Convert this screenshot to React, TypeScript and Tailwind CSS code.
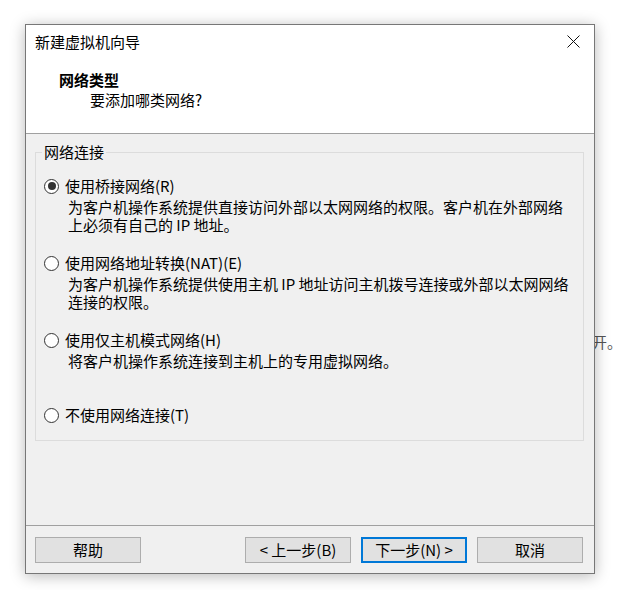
import React from 'react';

type NetOption = {
  label: string;
  lines: string[];
  checked?: boolean;
};

const options: NetOption[] = [
  {
    label: '使用桥接网络(R)',
    lines: ['为客户机操作系统提供直接访问外部以太网网络的权限。客户机在外部网络', '上必须有自己的 IP 地址。'],
    checked: true,
  },
  {
    label: '使用网络地址转换(NAT)(E)',
    lines: ['为客户机操作系统提供使用主机 IP 地址访问主机拨号连接或外部以太网网络', '连接的权限。'],
  },
  {
    label: '使用仅主机模式网络(H)',
    lines: ['将客户机操作系统连接到主机上的专用虚拟网络。'],
  },
];

const Radio = ({ checked }: { checked?: boolean }) => (
  <span className="flex h-[15px] w-[15px] shrink-0 items-center justify-center rounded-full border border-[#333333] bg-white">
    {checked && <span className="h-[8px] w-[8px] rounded-full bg-[#333333]" />}
  </span>
);

const RadioRow = ({ option }: { option: NetOption }) => (
  <div className="flex flex-col">
    <div className="flex h-[20px] items-center">
      <Radio checked={option.checked} />
      <span className="ml-[6px] whitespace-nowrap leading-[20px]">{option.label}</span>
    </div>
    {option.lines.length > 0 && (
      <div className="ml-[24px] mt-[2px] flex flex-col whitespace-nowrap leading-[18px]">
        {option.lines.map((line, i) => (
          <span key={i}>{line}</span>
        ))}
      </div>
    )}
  </div>
);

const WinButton = ({ text, primary }: { text: string; primary?: boolean }) => (
  <button
    className={`flex h-[26px] w-[106px] items-center justify-center bg-[#e1e1e1] text-[15px] leading-[20px] text-black ${
      primary ? 'border-2 border-[#0078d7]' : 'border border-[#adadad]'
    }`}
  >
    {text}
  </button>
);

const App = () => {
  return (
    <div className="relative h-[590px] w-[617px] overflow-hidden bg-white font-['Noto_Sans_CJK_SC',sans-serif] text-[15px] text-black">
      {/* text of the window behind */}
      <span className="absolute left-[592px] top-[332px] z-0 leading-[20px] text-[#555555]">开。</span>

      <div className="relative z-10 ml-[25px] mt-[24px] flex h-[550px] w-[570px] flex-col border border-[#777777] bg-[#f0f0f0] shadow-[0_2px_14px_rgba(0,0,0,0.28)]">
        {/* header */}
        <div className="flex h-[109px] flex-col border-b border-[#a0a0a0] bg-white">
          <div className="mt-[7px] flex items-center justify-between pl-[9px] pr-[14px]">
            <span className="leading-[20px]">新建虚拟机向导</span>
            <svg width="13" height="13" viewBox="0 0 13 13" className="mt-[-1px]">
              <path d="M0.5 0.5L12.5 12.5M12.5 0.5L0.5 12.5" stroke="#111" strokeWidth="1" />
            </svg>
          </div>
          <span className="ml-[33px] mt-[18px] font-bold leading-[20px]">网络类型</span>
          <span className="ml-[64px] leading-[20px]">要添加哪类网络?</span>
        </div>

        {/* body */}
        <div className="flex h-[391px] flex-col pl-[9px] pr-[10px] pt-[18px]">
          <div className="relative flex h-[289px] flex-col border border-[#dcdcdc] pl-[8px] pt-[23px]">
            <span className="absolute left-[6px] top-[-11px] bg-[#f0f0f0] px-[2px] leading-[20px]">网络连接</span>
            <div className="flex flex-col gap-[19px]">
              {options.map((option, i) => (
                <RadioRow key={i} option={option} />
              ))}
            </div>
            <div className="mt-[35px] flex h-[20px] items-center">
              <Radio />
              <span className="ml-[6px] leading-[20px]">不使用网络连接(T)</span>
            </div>
          </div>
        </div>

        {/* footer */}
        <div className="flex flex-1 items-start border-t border-[#a0a0a0] pl-[9px] pr-[11px] pt-[11px]">
          <WinButton text="帮助" />
          <div className="ml-auto flex gap-[10px]">
            <WinButton text="< 上一步(B)" />
            <WinButton text="下一步(N) >" primary />
            <WinButton text="取消" />
          </div>
        </div>
      </div>
    </div>
  );
};

export default App;
